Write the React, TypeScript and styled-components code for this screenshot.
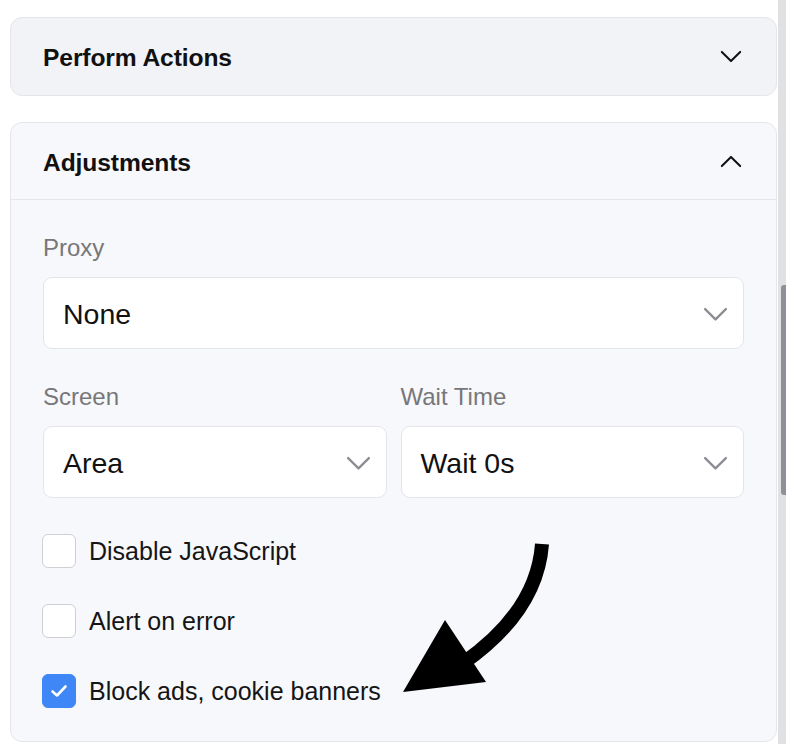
import React from "react";
import styled, { createGlobalStyle } from "styled-components";

const Global = createGlobalStyle`
  html, body { margin: 0; padding: 0; background: #ffffff; }
  body { font-family: "Liberation Sans", Arial, sans-serif; }
  * { box-sizing: border-box; }
`;

const Page = styled.div`
  position: relative;
  width: 786px;
  height: 744px;
  display: flex;
  overflow: hidden;
  background: #ffffff;
`;

const Content = styled.div`
  width: 778px;
  padding: 17px 1px 0 10px;
  display: flex;
  flex-direction: column;
  gap: 26px;
`;

const Track = styled.div`
  width: 8px;
  height: 100%;
  background: #e1e1e3;
  display: flex;
  justify-content: flex-end;
  padding-top: 285px;
`;

const Thumb = styled.div`
  width: 5px;
  height: 210px;
  background: #8f8f97;
  border-radius: 3px 0 0 3px;
`;

const Card = styled.section<{ $tone: string }>`
  background: ${(p) => p.$tone};
  border: 1px solid #e5e6eb;
  border-radius: 12px;
  display: flex;
  flex-direction: column;
`;

const Header = styled.div<{ $divided?: boolean }>`
  height: 77px;
  padding: 0 34px 0 32px;
  display: flex;
  align-items: center;
  justify-content: space-between;
  border-bottom: ${(p) => (p.$divided ? "1px solid #e5e6eb" : "none")};
`;

const Title = styled.h2`
  margin: 0;
  padding-top: 3px;
  font-size: 24.6px;
  font-weight: 700;
  color: #111111;
  line-height: 30px;
  letter-spacing: -0.1px;
`;

const Body = styled.div`
  padding: 32px 32px 33px 32px;
  display: flex;
  flex-direction: column;
`;

const Field = styled.div`
  display: flex;
  flex-direction: column;
  gap: 15px;
  min-width: 0;
`;

const Label = styled.div`
  font-size: 24px;
  line-height: 30px;
  color: #777779;
  padding-top: 1px;
  height: 30px;
`;

const Row = styled.div`
  display: grid;
  grid-template-columns: 1fr 1fr;
  gap: 14px;
  margin-top: 32px;
`;

const Select = styled.div`
  height: 72px;
  background: #ffffff;
  border: 1px solid #e4e5ea;
  border-radius: 9px;
  display: flex;
  align-items: center;
  justify-content: space-between;
  padding: 2px 15px 0 19px;
  font-size: 28.5px;
  color: #111111;
`;

const Checks = styled.div`
  display: flex;
  flex-direction: column;
  gap: 36px;
  margin-top: 36px;
`;

const CheckRow = styled.label`
  display: flex;
  align-items: center;
  gap: 13px;
  height: 34px;
  margin-left: -1px;
  font-size: 25px;
  color: #151515;
`;

const Box = styled.span<{ $on?: boolean }>`
  width: 34px;
  height: 34px;
  flex: none;
  border-radius: 6px;
  border: 1px solid ${(p) => (p.$on ? "#3f86f6" : "#cfd0d5")};
  background: ${(p) => (p.$on ? "#3f86f6" : "#ffffff")};
  display: flex;
  align-items: center;
  justify-content: center;
`;

const Overlay = styled.svg`
  position: absolute;
  left: 0;
  top: 0;
  pointer-events: none;
`;

const Chevron = ({ up, color, w }: { up?: boolean; color: string; w: number }) => (
  <svg width={w} height={w / 2 + 2} viewBox="0 0 24 14" fill="none">
    <path
      d={up ? "M2 12 L12 2 L22 12" : "M2 2 L12 12 L22 2"}
      stroke={color}
      strokeWidth={2.2}
      strokeLinecap="round"
      strokeLinejoin="round"
    />
  </svg>
);

const Check = () => (
  <svg width="18" height="14" viewBox="0 0 18 14" fill="none">
    <path d="M2.5 7.5 L7 11.5 L15.5 2.5" stroke="#ffffff" strokeWidth="2.6" strokeLinecap="round" strokeLinejoin="round" />
  </svg>
);

export default function App() {
  return (
    <Page>
      <Global />
      <Content>
        <Card $tone="#f2f3f7">
          <Header>
            <Title>Perform Actions</Title>
            <Chevron color="#111" w={22} />
          </Header>
        </Card>
        <Card $tone="#f7f8fb">
          <Header $divided>
            <Title>Adjustments</Title>
            <Chevron up color="#111" w={22} />
          </Header>
          <Body>
            <Field>
              <Label>Proxy</Label>
              <Select>
                <span>None</span>
                <Chevron color="#8c8c92" w={25} />
              </Select>
            </Field>
            <Row>
              <Field>
                <Label>Screen</Label>
                <Select>
                  <span>Area</span>
                  <Chevron color="#8c8c92" w={25} />
                </Select>
              </Field>
              <Field>
                <Label>Wait Time</Label>
                <Select>
                  <span>Wait 0s</span>
                  <Chevron color="#8c8c92" w={25} />
                </Select>
              </Field>
            </Row>
            <Checks>
              <CheckRow>
                <Box />
                Disable JavaScript
              </CheckRow>
              <CheckRow>
                <Box />
                Alert on error
              </CheckRow>
              <CheckRow>
                <Box $on>
                  <Check />
                </Box>
                Block ads, cookie banners
              </CheckRow>
            </Checks>
          </Body>
        </Card>
      </Content>
      <Track>
        <Thumb />
      </Track>
      <Overlay width="786" height="744" viewBox="0 0 786 744">
        <path d="M542 544 Q537 612 462 664" stroke="#000" strokeWidth="14" fill="none" />
        <polygon points="445,620 486,682 403,692" fill="#000" />
      </Overlay>
    </Page>
  );
}
